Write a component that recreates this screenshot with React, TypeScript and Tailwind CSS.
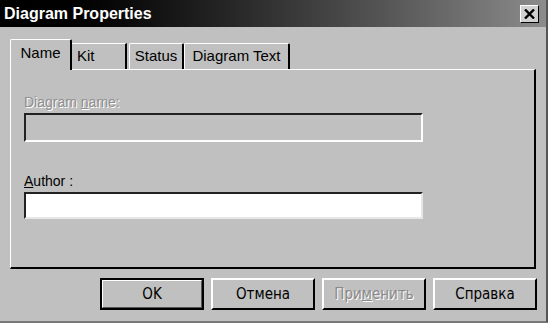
import React from "react";

// Classic Win9x bevel helpers
const raised = "border-t border-l border-t-white border-l-white border-b border-r border-b-black border-r-black";
const tabEdge = "h-[26px] flex items-center border-t border-l border-t-white border-l-white border-r-2 border-r-black rounded-t-[2px]";

interface ButtonProps {
  label: React.ReactNode;
  isDefault?: boolean;
  disabled?: boolean;
}

const Button: React.FC<ButtonProps> = ({ label, isDefault, disabled }) => (
  <div
    className={`w-[104px] h-[32px] flex items-center justify-center ${
      isDefault ? "border-2 border-black" : "border-t-2 border-l-2 border-t-white border-l-white border-b-2 border-r-2 border-b-black border-r-black"
    }`}
  >
    <div
      className={`w-full h-full flex items-center justify-center ${
        isDefault ? "border-t border-l border-t-white border-l-white border-b border-r border-b-[#555] border-r-[#555]" : ""
      }`}
    >
      <span
        className={`text-[15px] ${disabled ? "text-[#8a8a8a] [text-shadow:1px_1px_0_#fff]" : "text-black"}`}
        style={{ fontFamily: '"DejaVu Sans Condensed", "DejaVu Sans", sans-serif' }}
      >
        {label}
      </span>
    </div>
  </div>
);

export default function App() {
  return (
    <div
      className="w-[548px] h-[323px] bg-[#c0c0c0] flex flex-col overflow-hidden border-r-2 border-b-2 border-r-[#555] border-b-[#777]"
      style={{ fontFamily: '"Liberation Sans", Arial, sans-serif' }}
    >
      {/* title bar */}
      <div className="h-[27px] shrink-0 flex items-center justify-between pl-[4px] pr-[7px] bg-gradient-to-r from-black via-[#333] to-[#8c8c8c]">
        <span className="text-white font-bold text-[16px]">Diagram Properties</span>
        <div className={`w-[19px] h-[18px] bg-[#d0d0d0] flex items-center justify-center ${raised}`}>
          <svg width="11" height="10" viewBox="0 0 11 10">
            <path d="M1 0.5 L10 9.5 M10 0.5 L1 9.5" stroke="black" strokeWidth="2.4" />
          </svg>
        </div>
      </div>

      <div className="flex flex-col pl-[10px] pr-[10px] pt-[11px]">
        {/* tabs */}
        <div className="flex items-end h-[31px]">
          <div className="w-[62px] h-[31px] -mb-px relative z-10 bg-[#c0c0c0] pb-1 flex items-center justify-center border-t border-l border-t-white border-l-white border-r-2 border-r-black rounded-t-[2px]">
            <span className="text-[15px]">Name</span>
          </div>
          <div className="w-[55px] h-[26px] flex items-center pl-[5px] border-t border-t-white border-r-2 border-r-black">
            <span className="text-[15px]">Kit</span>
          </div>
          <div className={`w-[55px] ml-[2px] justify-center ${tabEdge}`}>
            <span className="text-[15px]">Status</span>
          </div>
          <div className={`w-[106px] justify-center ${tabEdge}`}>
            <span className="text-[15px]">Diagram Text</span>
          </div>
        </div>

        {/* panel */}
        <div className="h-[200px] w-[526px] border-t border-l border-t-white border-l-white border-r-2 border-b-2 border-r-black border-b-black flex flex-col pl-[13px] pt-[24px]">
          <span className="text-[14px] leading-[16px] text-[#8f8f8f] [text-shadow:1px_1px_0_#fff]">
            Diagram <span className="underline">n</span>ame:
          </span>
          <div className="mt-[3px] w-[399px] h-[29px] border-t-2 border-l-2 border-t-[#222] border-l-[#222] border-b-2 border-r-2 border-b-white border-r-white bg-[#c0c0c0]" />

          <span className="mt-[31px] text-[14px] leading-[16px] text-black">
            <span className="underline">A</span>uthor :
          </span>
          <div className="mt-[3px] w-[399px] h-[27px] border-t-2 border-l-2 border-t-[#222] border-l-[#222] border-b-2 border-r-2 border-b-[#e6e6e6] border-r-[#e6e6e6] bg-white" />
        </div>

        {/* buttons */}
        <div className="flex justify-end gap-[7px] pt-[9px] mr-[-1px]">
          <Button label="OK" isDefault />
          <Button label="Отмена" />
          <Button
            label={
              <>
                При<span className="underline">м</span>енить
              </>
            }
            disabled
          />
          <Button label="Справка" />
        </div>
      </div>
    </div>
  );
}
